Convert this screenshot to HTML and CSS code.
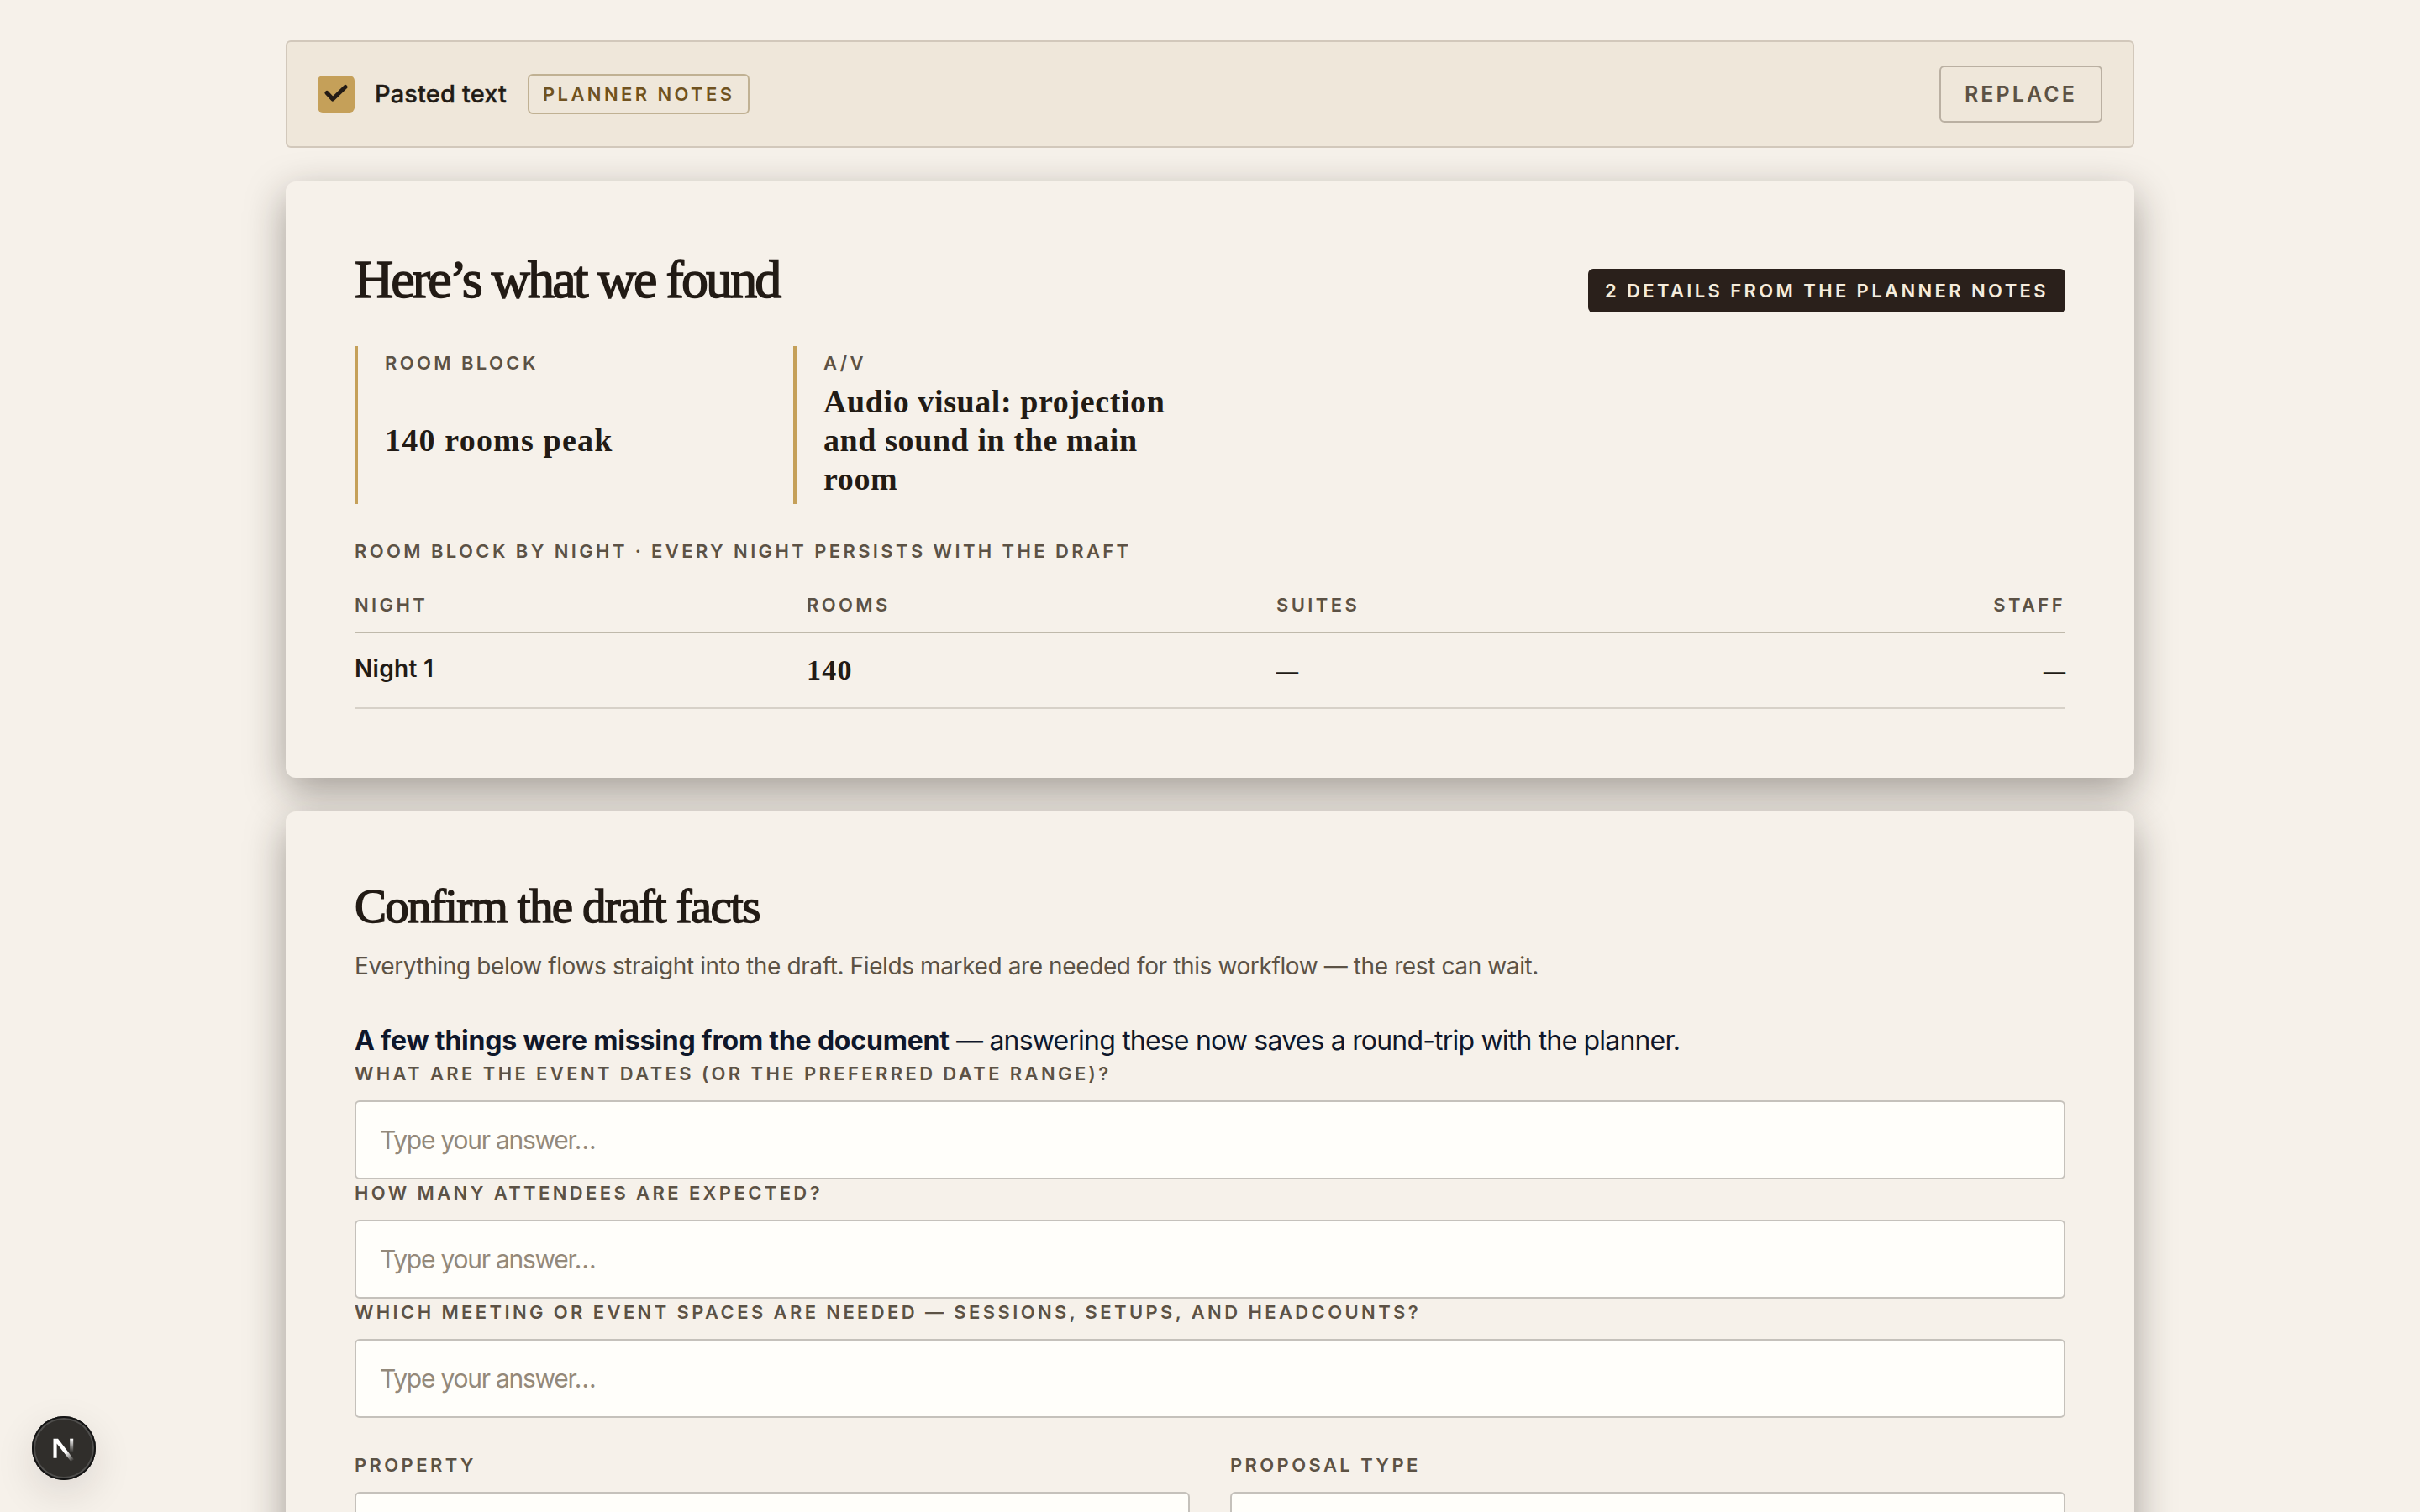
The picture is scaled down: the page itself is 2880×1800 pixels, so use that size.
FILE: index.html
```
<!DOCTYPE html>
<html lang="en">
<head>
    <meta charset="UTF-8">
    <meta name="viewport" content="width=device-width, initial-scale=1.0">
    <title>Proposal Draft</title>
    <link rel="stylesheet" href="styles.css">
</head>
<body>

    <main class="page">

        <!-- Source bar -->
        <div class="source-bar">
            <span class="source-check">
                <svg width="28" height="28" viewBox="0 0 28 28" fill="none" stroke="#231b15" stroke-width="5" stroke-linecap="round" stroke-linejoin="round">
                    <path d="M3 12.5L10 20L25 5.5"/>
                </svg>
            </span>
            <span class="source-name">Pasted text</span>
            <span class="source-tag">Planner notes</span>
            <button class="replace-btn">Replace</button>
        </div>

        <!-- Found details -->
        <section class="card">
            <div class="card-head">
                <h1>Here’s what we found</h1>
                <span class="count-badge">2 details from the planner notes</span>
            </div>

            <dl class="facts">
                <div class="fact fact-short">
                    <dt class="label">Room block</dt>
                    <dd>140 rooms peak</dd>
                </div>
                <div class="fact">
                    <dt class="label">A/V</dt>
                    <dd>Audio visual: projection and sound in the main room</dd>
                </div>
            </dl>

            <p class="label nights-title">Room block by night · every night persists with the draft</p>
            <table class="nights">
                <thead>
                    <tr>
                        <th class="col-night">Night</th>
                        <th class="col-rooms">Rooms</th>
                        <th class="col-suites">Suites</th>
                        <th class="col-staff">Staff</th>
                    </tr>
                </thead>
                <tbody>
                    <tr>
                        <td class="night-name">Night 1</td>
                        <td>140</td>
                        <td class="empty">—</td>
                        <td class="empty col-staff">—</td>
                    </tr>
                </tbody>
            </table>
        </section>

        <!-- Draft facts form -->
        <section class="card">
            <h2>Confirm the draft facts</h2>
            <p class="hint">Everything below flows straight into the draft. Fields marked are needed for this workflow — the rest can wait.</p>

            <p class="missing"><strong>A few things were missing from the document</strong> — answering these now saves a round-trip with the planner.</p>
            <div class="field">
                <label class="label" for="dates">What are the event dates (or the preferred date range)?</label>
                <input id="dates" type="text" placeholder="Type your answer…">
            </div>
            <div class="field">
                <label class="label" for="attendees">How many attendees are expected?</label>
                <input id="attendees" type="text" placeholder="Type your answer…">
            </div>
            <div class="field">
                <label class="label" for="spaces">Which meeting or event spaces are needed — sessions, setups, and headcounts?</label>
                <input id="spaces" type="text" placeholder="Type your answer…">
            </div>

            <div class="field-row">
                <div class="field">
                    <label class="label" for="property">Property</label>
                    <input id="property" type="text">
                </div>
                <div class="field">
                    <label class="label" for="type">Proposal type</label>
                    <input id="type" type="text">
                </div>
            </div>
        </section>

    </main>

    <!-- Dev tools button -->
    <div class="dev-btn">
        <svg width="76" height="76" viewBox="0 0 76 76">
            <defs>
                <linearGradient id="diagonal-fade" gradientUnits="userSpaceOnUse" x1="41" y1="43" x2="49" y2="53">
                    <stop stop-color="#fff"/>
                    <stop offset="1" stop-color="#fff" stop-opacity="0"/>
                </linearGradient>
                <linearGradient id="stem-fade" gradientUnits="userSpaceOnUse" x1="47" y1="27" x2="47" y2="43">
                    <stop stop-color="#fff"/>
                    <stop offset="1" stop-color="#fff" stop-opacity="0"/>
                </linearGradient>
            </defs>
            <path fill="url(#diagonal-fade)" d="M25.5 26.7H31L50 51.5L46.5 54L29.6 32.5V49.7H25.5Z"/>
            <path fill="url(#stem-fade)" d="M45.2 26.7H49.2V44H45.2Z"/>
        </svg>
    </div>

</body>
</html>
```
FILE: styles.css
```
* {
    box-sizing: border-box;
}

body {
    margin: 0;
    height: 1800px;
    overflow: hidden;
    background-color: #f6f1ea;
    color: #221b15;
    font-family: Inter, "Liberation Sans", sans-serif;
}

h1, h2, p, dl, dd {
    margin: 0;
}

.page {
    width: 2200px;
    margin: 0 auto;
    padding-top: 48px;
    display: flex;
    flex-direction: column;
    gap: 40px;
}

/* Source bar */
.source-bar {
    display: flex;
    align-items: center;
    height: 128px;
    padding: 0 36px;
    background-color: #efe7da;
    border: 2px solid #d2c8bb;
    border-radius: 6px;
}

.source-check {
    display: flex;
    align-items: center;
    justify-content: center;
    width: 44px;
    height: 44px;
    margin-right: 24px;
    background-color: #c5a059;
    border-radius: 6px;
}

.source-name {
    margin-right: 25px;
    padding-bottom: 1px;
    font-size: 29px;
    font-weight: 500;
    letter-spacing: 0.15px;
    -webkit-text-stroke: 0.4px #221b15;
}

.source-tag {
    height: 48px;
    padding: 0 16px;
    border: 2px solid #c0b193;
    border-radius: 6px;
    color: #705220;
    font-size: 22px;
    font-weight: 600;
    line-height: 44px;
    letter-spacing: 3.39px;
    text-transform: uppercase;
}

.replace-btn {
    width: 194px;
    height: 68px;
    margin-left: auto;
    padding: 0;
    background: none;
    border: 2px solid #bab0a2;
    border-radius: 6px;
    color: #5c5245;
    font-family: inherit;
    font-size: 25px;
    font-weight: 600;
    letter-spacing: 3.1px;
    text-transform: uppercase;
}

/* Cards */
.card {
    padding: 82px;
    background-color: #f6f1ea;
    border-radius: 12px;
    box-shadow: 0 16px 48px rgba(34, 27, 21, 0.39);
}

.card:first-of-type {
    height: 710px;
}

.card-head {
    display: flex;
    align-items: flex-end;
    justify-content: space-between;
    height: 74px;
}

h1, h2 {
    font-family: "Liberation Serif", serif;
    font-weight: 400;
    -webkit-text-stroke: 1.5px #221b15;
}

h1 {
    align-self: flex-start;
    font-size: 64px;
    line-height: 70px;
    letter-spacing: -2.9px;
}

h2 {
    font-size: 57px;
    line-height: 62px;
    letter-spacing: -1.7px;
}

.count-badge {
    height: 52px;
    padding: 0 20px;
    background-color: #2a201b;
    border-radius: 6px;
    color: #f6ecdc;
    font-size: 22px;
    font-weight: 600;
    line-height: 52px;
    letter-spacing: 3.39px;
    text-transform: uppercase;
}

.label, th {
    color: #5c5245;
    font-size: 22px;
    font-weight: 600;
    line-height: 32px;
    letter-spacing: 3.39px;
    text-transform: uppercase;
}

.facts {
    display: grid;
    grid-template-columns: repeat(4, 1fr);
    gap: 52px;
    margin-top: 40px;
}

.fact {
    display: flex;
    flex-direction: column;
    height: 188px;
    padding: 9px 0 0 32px;
    border-left: 4px solid #c5a059;
}

.fact .label {
    margin-top: -5px;
}

.fact dd {
    margin: auto 0;
    font-family: "Liberation Serif", serif;
    font-size: 38px;
    font-weight: 700;
    line-height: 46px;
    letter-spacing: 0.6px;
}

.fact-short dd {
    letter-spacing: 1.2px;
}

/* Nights table */
.nights-title {
    margin-top: 40px;
}

.nights {
    width: 100%;
    border-spacing: 0;
    table-layout: fixed;
}

th, td {
    padding: 0;
    text-align: left;
}

th {
    height: 82px;
    padding-top: 16px;
    border-bottom: 2px solid #bfb9ab;
}

td {
    height: 90px;
    border-bottom: 2px solid #d7d1c8;
    font-family: "Liberation Serif", serif;
    font-size: 34px;
    font-weight: 700;
    letter-spacing: 1.3px;
}

.col-night {
    width: 538px;
}

.col-rooms {
    width: 559px;
}

.col-staff {
    text-align: right;
}

.night-name {
    padding-bottom: 4px;
    font-family: inherit;
    font-size: 28px;
    font-weight: 600;
    letter-spacing: 0.3px;
}

.empty {
    padding-top: 2px;
    font-size: 26px;
    letter-spacing: 0;
}

/* Form */
.hint {
    margin-top: 18px;
    color: #5c5245;
    font-size: 28px;
    line-height: 44px;
    letter-spacing: -0.39px;
}

.missing {
    margin-top: 44px;
    color: #0f172a;
    font-size: 32px;
    line-height: 46px;
    letter-spacing: -0.81px;
}

.missing strong {
    letter-spacing: -0.19px;
}

.field {
    display: flex;
    flex-direction: column;
    gap: 16px;
}

.field input {
    height: 94px;
    padding: 0 28px;
    background-color: #fffefa;
    border: 2px solid #c5c1bb;
    border-radius: 6px;
    font-family: inherit;
    font-size: 30px;
    letter-spacing: -1.25px;
}

.field input::placeholder {
    color: #94897a;
}

.field-row {
    display: grid;
    grid-template-columns: 1fr 1fr;
    gap: 48px;
    margin-top: 40px;
}

/* Dev tools button */
.dev-btn {
    position: fixed;
    left: 38px;
    bottom: 38px;
    width: 76px;
    height: 76px;
    background-color: #302e2b;
    border-radius: 50%;
    box-shadow: inset 0 0 0 2px #141414, inset 0 0 0 4px #4f4e4c, 0 16px 48px rgba(34, 27, 21, 0.12);
}
```
